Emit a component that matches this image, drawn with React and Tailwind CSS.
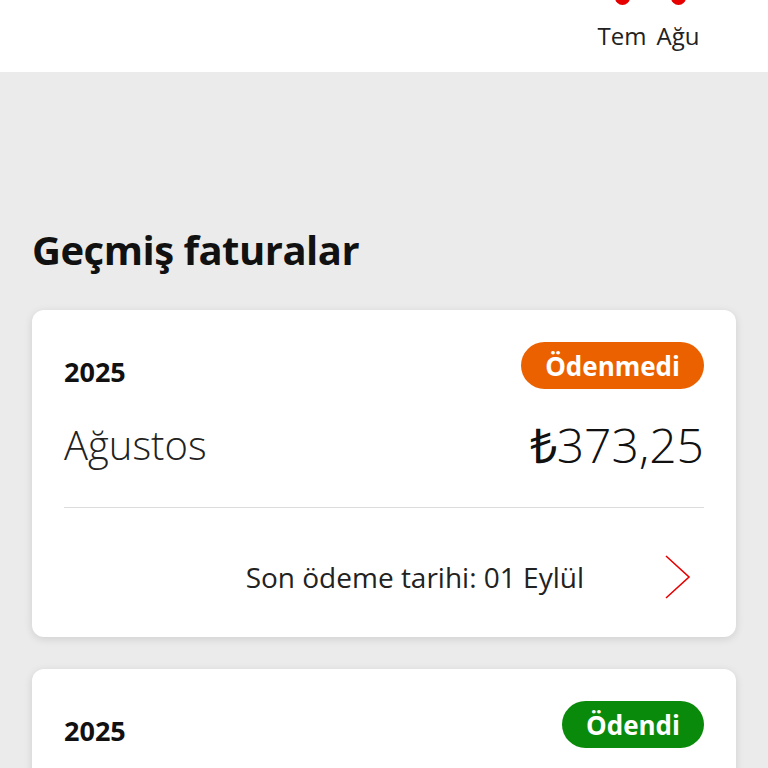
const bills = [
    { year: '2025', month: 'Ağustos', amount: '373,25', status: 'Ödenmedi', due: '01 Eylül' },
    { year: '2025', month: 'Temmuz', amount: '373,25', status: 'Ödendi', due: '01 Ağustos' },
];

function StatusBadge({ status }) {
    const paid = status === 'Ödendi';
    return (
        <span
            className={`inline-flex items-center h-[47px] px-[24px] rounded-full text-white font-bold text-[26px] leading-none ${paid ? 'bg-[#0a8a0a]' : 'bg-[#eb6100]'}`}
        >
            {status}
        </span>
    );
}

function Chevron() {
    return (
        <svg width="28" height="44" viewBox="0 0 28 44" className="ml-[80px]">
            <polyline points="2,1 25,22 2,43" fill="none" stroke="#e60000" strokeWidth="1.6" />
        </svg>
    );
}

function BillCard({ bill }) {
    return (
        <div className="bg-white rounded-[12px] shadow-[0_2px_8px_rgba(0,0,0,0.12)] px-[32px] pt-[32px]">
            <div className="flex items-end justify-between">
                <span className="font-bold text-[27px] leading-[30px] mb-[2px] text-[#111]">{bill.year}</span>
                <StatusBadge status={bill.status} />
            </div>
            <div className="flex items-center justify-between mt-[30px] pb-[36px] border-b border-[#dcdcdc]">
                <span className="font-light text-[40px] leading-[52px] text-[#222]">{bill.month}</span>
                <span className="font-light text-[48px] leading-[52px] text-[#111]">₺{bill.amount}</span>
            </div>
            <div className="flex items-center justify-end h-[129px] pt-[8px] pr-[12px]">
                <span className="text-[28px] text-[#222]">Son ödeme tarihi: {bill.due}</span>
                <Chevron />
            </div>
        </div>
    );
}

export default function App() {
    return (
        <div className="min-h-screen bg-[#ebebeb] font-['Open_Sans',sans-serif] overflow-hidden">
            {/* Grafik başlığı */}
            <div className="bg-white h-[72px] flex justify-end pr-[62px] overflow-hidden">
                {['Tem', 'Ağu'].map((m) => (
                    <div key={m} className="w-[56px] flex flex-col items-center">
                        <div className="w-[15px] h-[15px] -mt-[10px] rounded-full bg-[#e60000]" />
                        <span className="mt-[16px] text-[24px] leading-[30px] text-[#222]">{m}</span>
                    </div>
                ))}
            </div>

            <div className="px-[32px] pt-[152px]">
                <h2 className="font-bold text-[40px] leading-[52px] text-[#111] tracking-[-0.5px]">Geçmiş faturalar</h2>
                <div className="mt-[34px] flex flex-col gap-[32px]">
                    {bills.map((b, i) => (
                        <BillCard key={i} bill={b} />
                    ))}
                </div>
            </div>
        </div>
    );
}
